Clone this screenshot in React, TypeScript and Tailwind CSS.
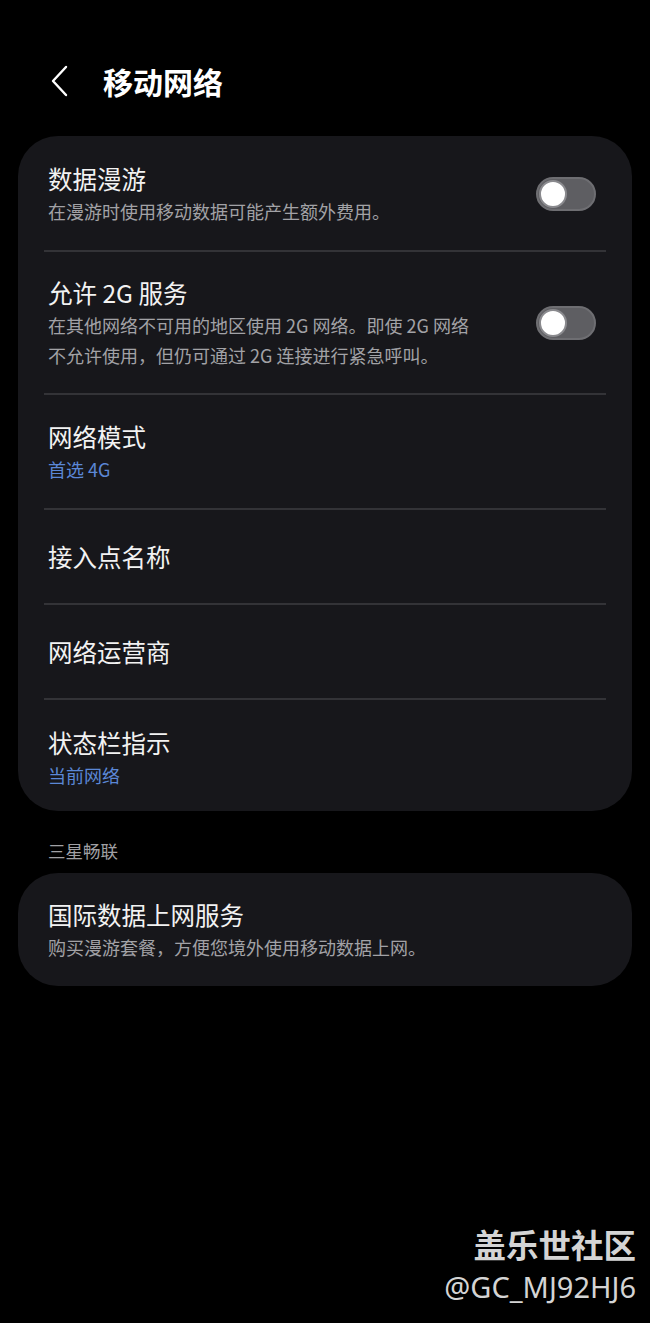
import React from 'react';

const font = { fontFamily: '"Noto Sans CJK SC", "Noto Sans", sans-serif' };

const Toggle: React.FC = () => (
  <div className="w-[60px] h-[34px] rounded-full bg-[#5e5e62] border-[2px] border-[#6e6e72] flex items-center px-[1px] shrink-0">
    <div className="w-[28px] h-[28px] rounded-full bg-white border-[2px] border-[#8a8a8e]" />
  </div>
);

const Divider: React.FC = () => <div className="mx-[26px] h-[2px] bg-[#333337]" />;

type RowProps = {
  title: string;
  sub?: string[];
  blue?: string;
  toggle?: boolean;
  h: string;
};

const Row: React.FC<RowProps> = ({ title, sub, blue, toggle, h }) => (
  <div className={`flex items-center justify-between pl-[30px] pr-[36px] ${h}`}>
    <div className="flex flex-col">
      <div className="text-[24.5px] leading-[34px] text-[#f2f2f2]">{title}</div>
      {sub && sub.map((s, i) => (
        <div key={i} className="text-[18px] leading-[30px] text-[#a2a2a6]">{s}</div>
      ))}
      {blue && <div className="text-[18px] leading-[30px] text-[#5b87d6]">{blue}</div>}
    </div>
    {toggle && <Toggle />}
  </div>
);

export default function App() {
  return (
    <div className="w-[650px] h-[1323px] bg-black overflow-hidden relative" style={font}>
      <div className="flex items-center h-[80px] mt-[41px] pl-[48px]">
        <svg width="22" height="34" viewBox="0 0 22 34" fill="none" stroke="#ffffff" strokeWidth="2.4" strokeLinecap="round" strokeLinejoin="round">
          <path d="M18 3 L5 17 L18 31" />
        </svg>
        <div className="ml-[33px] text-[30px] font-bold text-white leading-none">移动网络</div>
      </div>

      <div className="mx-[18px] mt-[15px] bg-[#17171b] rounded-[40px] pt-[4px] pb-[4px]">
        <Row h="h-[110px] pb-[3px]" title="数据漫游" sub={['在漫游时使用移动数据可能产生额外费用。']} toggle />
        <Divider />
        <Row h="h-[141px]" title="允许 2G 服务" sub={['在其他网络不可用的地区使用 2G 网络。即使 2G 网络', '不允许使用，但仍可通过 2G 连接进行紧急呼叫。']} toggle />
        <Divider />
        <Row h="h-[113px]" title="网络模式" blue="首选 4G" />
        <Divider />
        <Row h="h-[93px]" title="接入点名称" />
        <Divider />
        <Row h="h-[93px]" title="网络运营商" />
        <Divider />
        <Row h="h-[107px] pt-[9px]" title="状态栏指示" blue="当前网络" />
      </div>

      <div className="pl-[48px] mt-[26px] text-[17.5px] leading-[28px] text-[#a0a0a4]">三星畅联</div>

      <div className="mx-[18px] mt-[8px] bg-[#17171b] rounded-[40px] h-[113px] flex items-center">
        <Row h="h-[113px]" title="国际数据上网服务" sub={['购买漫游套餐，方便您境外使用移动数据上网。']} />
      </div>

      <div className="absolute right-[14px] top-[1221px] flex flex-col items-end text-[#d4d4d4]">
        <div className="text-[32.5px] font-bold leading-[46px]">盖乐世社区</div>
        <div className="text-[29px] leading-[40px]" style={{ fontFamily: '"Noto Sans", sans-serif' }}>@GC_MJ92HJ6</div>
      </div>
    </div>
  );
}
